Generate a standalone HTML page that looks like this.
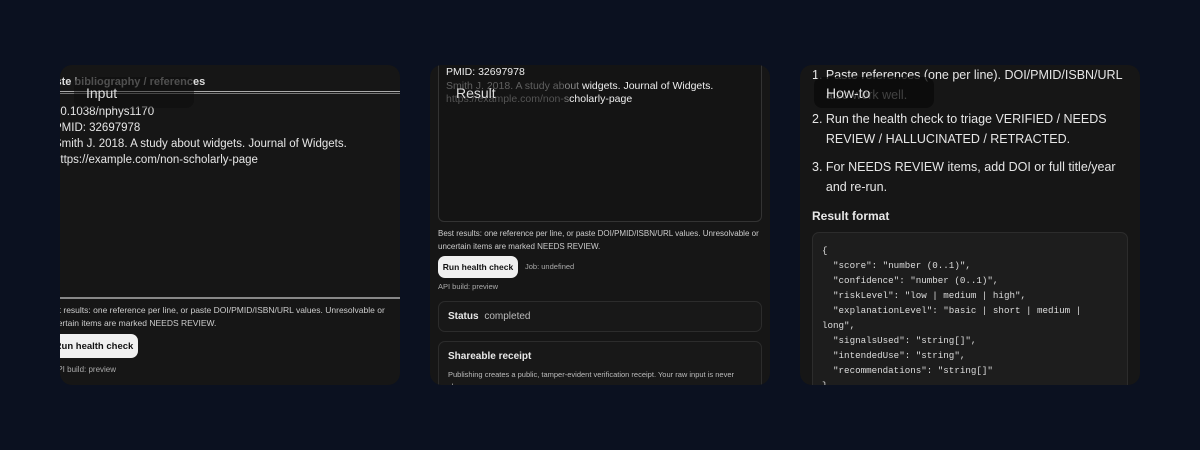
<!DOCTYPE html>
<html><head><meta charset="utf-8"><style>
*{box-sizing:border-box;margin:0;padding:0}
body{width:1200px;height:450px;background:#0b1120;font-family:"Liberation Sans",sans-serif;position:relative;overflow:hidden;color:#e8e8e8}
.card{position:absolute;top:65px;width:340px;height:320px;background:#161616;border-radius:12px;overflow:hidden}
.a{position:absolute;white-space:nowrap}
.pill{position:absolute;background:rgba(10,10,10,.45);border-radius:8px;color:#ddd;font-size:14px;padding:8px 12px}
.btn{position:absolute;background:#f0f0f0;color:#111;font-weight:bold;font-size:9.5px;border-radius:7px;display:flex;align-items:center;justify-content:center}
.box{position:absolute;border:1px solid #2c2c2c;border-radius:7px;background:#181818}
.mono{font-family:"Liberation Mono",monospace;font-size:9.2px;color:#ddd;white-space:pre}
</style></head><body>

<div class="card" style="left:60px">
  <div class="a" style="left:-18px;top:11px;font-size:11px;font-weight:bold;color:#ddd">Paste <span style="color:#888">bibliography / referenc</span>es</div>
  <div class="a" style="left:0;top:26px;width:340px;height:3px;border-top:1px solid #aaa;border-bottom:1px solid #777"></div>
  <div class="a" style="left:-6px;top:39px;font-size:11.5px;line-height:16px;color:#e6e6e6">10.1038/nphys1170<br>PMID: 32697978<br>Smith J. 2018. A study about widgets. Journal of Widgets.<br>https://example.com/non-scholarly-page</div>
  <div class="a" style="left:0;top:232px;width:340px;height:2px;background:#888"></div>
  <div class="a" style="left:-16px;top:239px;font-size:8.5px;line-height:13px;color:#ccc">Best results: one reference per line, or paste DOI/PMID/ISBN/URL values. Unresolvable or<br>uncertain items are marked NEEDS REVIEW.</div>
  <div class="btn" style="left:-10px;top:269px;width:88px;height:24px">Run health check</div>
  <div class="a" style="left:-8px;top:300px;font-size:8px;color:#aaa">API build: preview</div>
</div>
<div class="pill" style="left:74px;top:77px;width:120px;height:31px">Input</div>

<div class="card" style="left:430px">
  <div class="a" style="left:8px;top:-10px;width:324px;height:167px;border:1px solid #333;border-radius:6px;background:#141414"></div>
  <div class="a" style="left:16px;top:1px;font-size:10.5px;line-height:13.5px;color:#eee">PMID: 32697978<br><span style="color:#888">Smith J. 2018. A study about </span>widgets. Journal of Widgets.<br><span style="color:#777">https://example.com/non-s</span>cholarly-page</div>
  <div class="a" style="left:8px;top:163px;font-size:8px;line-height:12.5px;color:#ccc">Best results: one reference per line, or paste DOI/PMID/ISBN/URL values. Unresolvable or<br>uncertain items are marked NEEDS REVIEW.</div>
  <div class="btn" style="left:8px;top:191px;width:80px;height:22px;font-size:8.5px">Run health check</div>
  <div class="a" style="left:95px;top:197px;font-size:7.5px;color:#aaa">Job: undefined</div>
  <div class="a" style="left:8px;top:217px;font-size:7.5px;color:#aaa">API build: preview</div>
  <div class="box" style="left:8px;top:236px;width:324px;height:31px"><span class="a" style="left:9px;top:9px;font-size:10px;font-weight:bold">Status <span style="font-weight:normal;color:#bbb;margin-left:3px">completed</span></span></div>
  <div class="box" style="left:8px;top:276px;width:324px;height:60px"><span class="a" style="left:9px;top:9px;font-size:10px;font-weight:bold">Shareable receipt</span><span class="a" style="left:9px;top:27px;font-size:7.5px;line-height:12px;color:#bbb">Publishing creates a public, tamper-evident verification receipt. Your raw input is never<br>shown.</span></div>
</div>
<div class="pill" style="left:444px;top:77px;width:120px;height:31px;background:rgba(20,20,20,.35)">Result</div>

<div class="card" style="left:800px">
  <div class="a" style="left:12px;top:0px;font-size:12.5px;line-height:20px;color:#e6e6e6">1. Paste references (one per line). DOI/PMID/ISBN/URL<br>&nbsp;&nbsp;&nbsp;&nbsp;also work well.</div>
  <div class="a" style="left:12px;top:44px;font-size:12.5px;line-height:20px;color:#e6e6e6">2. Run the health check to triage VERIFIED / NEEDS<br>&nbsp;&nbsp;&nbsp;&nbsp;REVIEW / HALLUCINATED / RETRACTED.</div>
  <div class="a" style="left:12px;top:92px;font-size:12.5px;line-height:20px;color:#e6e6e6">3. For NEEDS REVIEW items, add DOI or full title/year<br>&nbsp;&nbsp;&nbsp;&nbsp;and re-run.</div>
  <div class="a" style="left:12px;top:144px;font-size:12px;font-weight:bold">Result format</div>
  <div class="box" style="left:12px;top:167px;width:316px;height:170px;background:#1d1d1d"></div>
  <div class="a mono" style="left:22px;top:178px;line-height:15px">{
  "score": "number (0..1)",
  "confidence": "number (0..1)",
  "riskLevel": "low | medium | high",
  "explanationLevel": "basic | short | medium |
long",
  "signalsUsed": "string[]",
  "intendedUse": "string",
  "recommendations": "string[]"
}</div>
</div>
<div class="pill" style="left:814px;top:77px;width:120px;height:31px;background:rgba(10,10,10,.75)">How-to</div>

</body></html>
